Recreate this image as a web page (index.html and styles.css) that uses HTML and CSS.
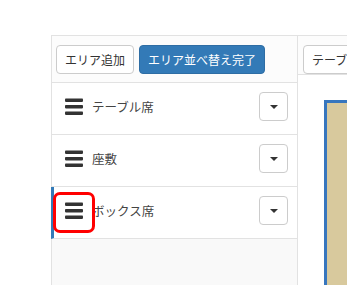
FILE: index.html
```html
<!DOCTYPE html>
<html lang="ja">
<head>
<meta charset="utf-8">
<link rel="stylesheet" href="styles.css">
</head>
<body>
<div class="page">
  <div class="panel">
    <div class="col-left">
      <div class="header">
        <button class="btn btn-default">エリア追加</button>
        <button class="btn btn-primary">エリア並べ替え完了</button>
      </div>
      <div class="row">
        <svg class="bars" viewBox="0 0 18 17" width="18" height="17"><rect x="0" y="0.5" width="18" height="3.4" rx="0.8"/><rect x="0" y="7" width="18" height="3.4" rx="0.8"/><rect x="0" y="13.5" width="18" height="3.4" rx="0.8"/></svg>
        <span class="name">テーブル席</span>
        <button class="btn btn-default caret-btn"><span class="caret"></span></button>
      </div>
      <div class="row">
        <svg class="bars" viewBox="0 0 18 17" width="18" height="17"><rect x="0" y="0.5" width="18" height="3.4" rx="0.8"/><rect x="0" y="7" width="18" height="3.4" rx="0.8"/><rect x="0" y="13.5" width="18" height="3.4" rx="0.8"/></svg>
        <span class="name">座敷</span>
        <button class="btn btn-default caret-btn"><span class="caret"></span></button>
      </div>
      <div class="row row-active">
        <svg class="bars" viewBox="0 0 18 17" width="18" height="17"><rect x="0" y="0.5" width="18" height="3.4" rx="0.8"/><rect x="0" y="7" width="18" height="3.4" rx="0.8"/><rect x="0" y="13.5" width="18" height="3.4" rx="0.8"/></svg>
        <span class="name">ボックス席</span>
        <button class="btn btn-default caret-btn"><span class="caret"></span></button>
        <span class="highlight"></span>
      </div>
      <div class="rest"></div>
    </div>
    <div class="col-right">
      <div class="header">
        <button class="btn btn-default">テーブル追加</button>
      </div>
      <div class="canvas">
        <div class="floor"></div>
      </div>
    </div>
  </div>
</div>
</body>
</html>
```
FILE: styles.css
```css
html, body {
  margin: 0;
  padding: 0;
  background: #fff;
  overflow: hidden;
}
body {
  width: 347px;
  height: 285px;
  font-family: "Noto Sans CJK JP", "Noto Sans", sans-serif;
  font-size: 12px;
  color: #333;
}
.page {
  padding: 35px 0 0 51px;
  height: 250px;
}
.panel {
  display: flex;
  height: 100%;
  border-top: 1px solid #e2e2e2;
  border-left: 1px solid #e2e2e2;
  width: 400px;
}
.col-left {
  width: 245px;
  flex: none;
  border-right: 1px solid #e2e2e2;
  display: flex;
  flex-direction: column;
  background: #f9f9f9;
}
.col-right {
  flex: 1;
  display: flex;
  flex-direction: column;
}
.header {
  display: flex;
  gap: 5px;
  height: 47px;
  box-sizing: border-box;
  padding: 9px 0 0 4px;
  border-bottom: 1px solid #e2e2e2;
  background: #fcfcfc;
}
.col-right .header {
  padding-left: 5px;
}
.btn {
  font-family: inherit;
  font-size: 12px;
  line-height: 17px;
  height: 29px;
  padding: 5px 8px;
  border-radius: 4px;
  border: 1px solid #ccc;
  box-sizing: border-box;
  margin: 0;
  white-space: nowrap;
}
.btn-default {
  background: #fff;
  color: #333;
}
.btn-primary {
  background: #337ab7;
  border-color: #2e6da4;
  color: #fff;
}
.row {
  position: relative;
  display: flex;
  align-items: center;
  height: 52px;
  box-sizing: border-box;
  padding: 9px 9px 13px 13px;
  background: #fff;
  border-bottom: 1px solid #e2e2e2;
}
.row-active {
  margin-left: -1px;
  border-left: 3px solid #337ab7;
  padding-left: 11px;
}
.bars {
  fill: #333;
  flex: none;
}
.name {
  margin-left: 9px;
  flex: 1;
  font-size: 12.5px;
  color: #444;
}
.caret-btn {
  width: 29px;
  padding: 0;
  display: flex;
  align-items: center;
  justify-content: center;
}
.caret {
  width: 0;
  height: 0;
  border-left: 4px solid transparent;
  border-right: 4px solid transparent;
  border-top: 4px solid #333;
}
.highlight {
  position: absolute;
  left: -1px;
  top: 5px;
  width: 42px;
  height: 41px;
  box-sizing: border-box;
  border: 3px solid #f00;
  border-radius: 7px;
}
.rest {
  flex: 1;
  background: #f9f9f9;
}
.canvas {
  flex: 1;
  background: #fff;
  padding: 25px 0 0 26px;
}
.floor {
  width: 200px;
  height: 300px;
  background: #d8c99d;
  border: 3px solid #3776be;
}
```
